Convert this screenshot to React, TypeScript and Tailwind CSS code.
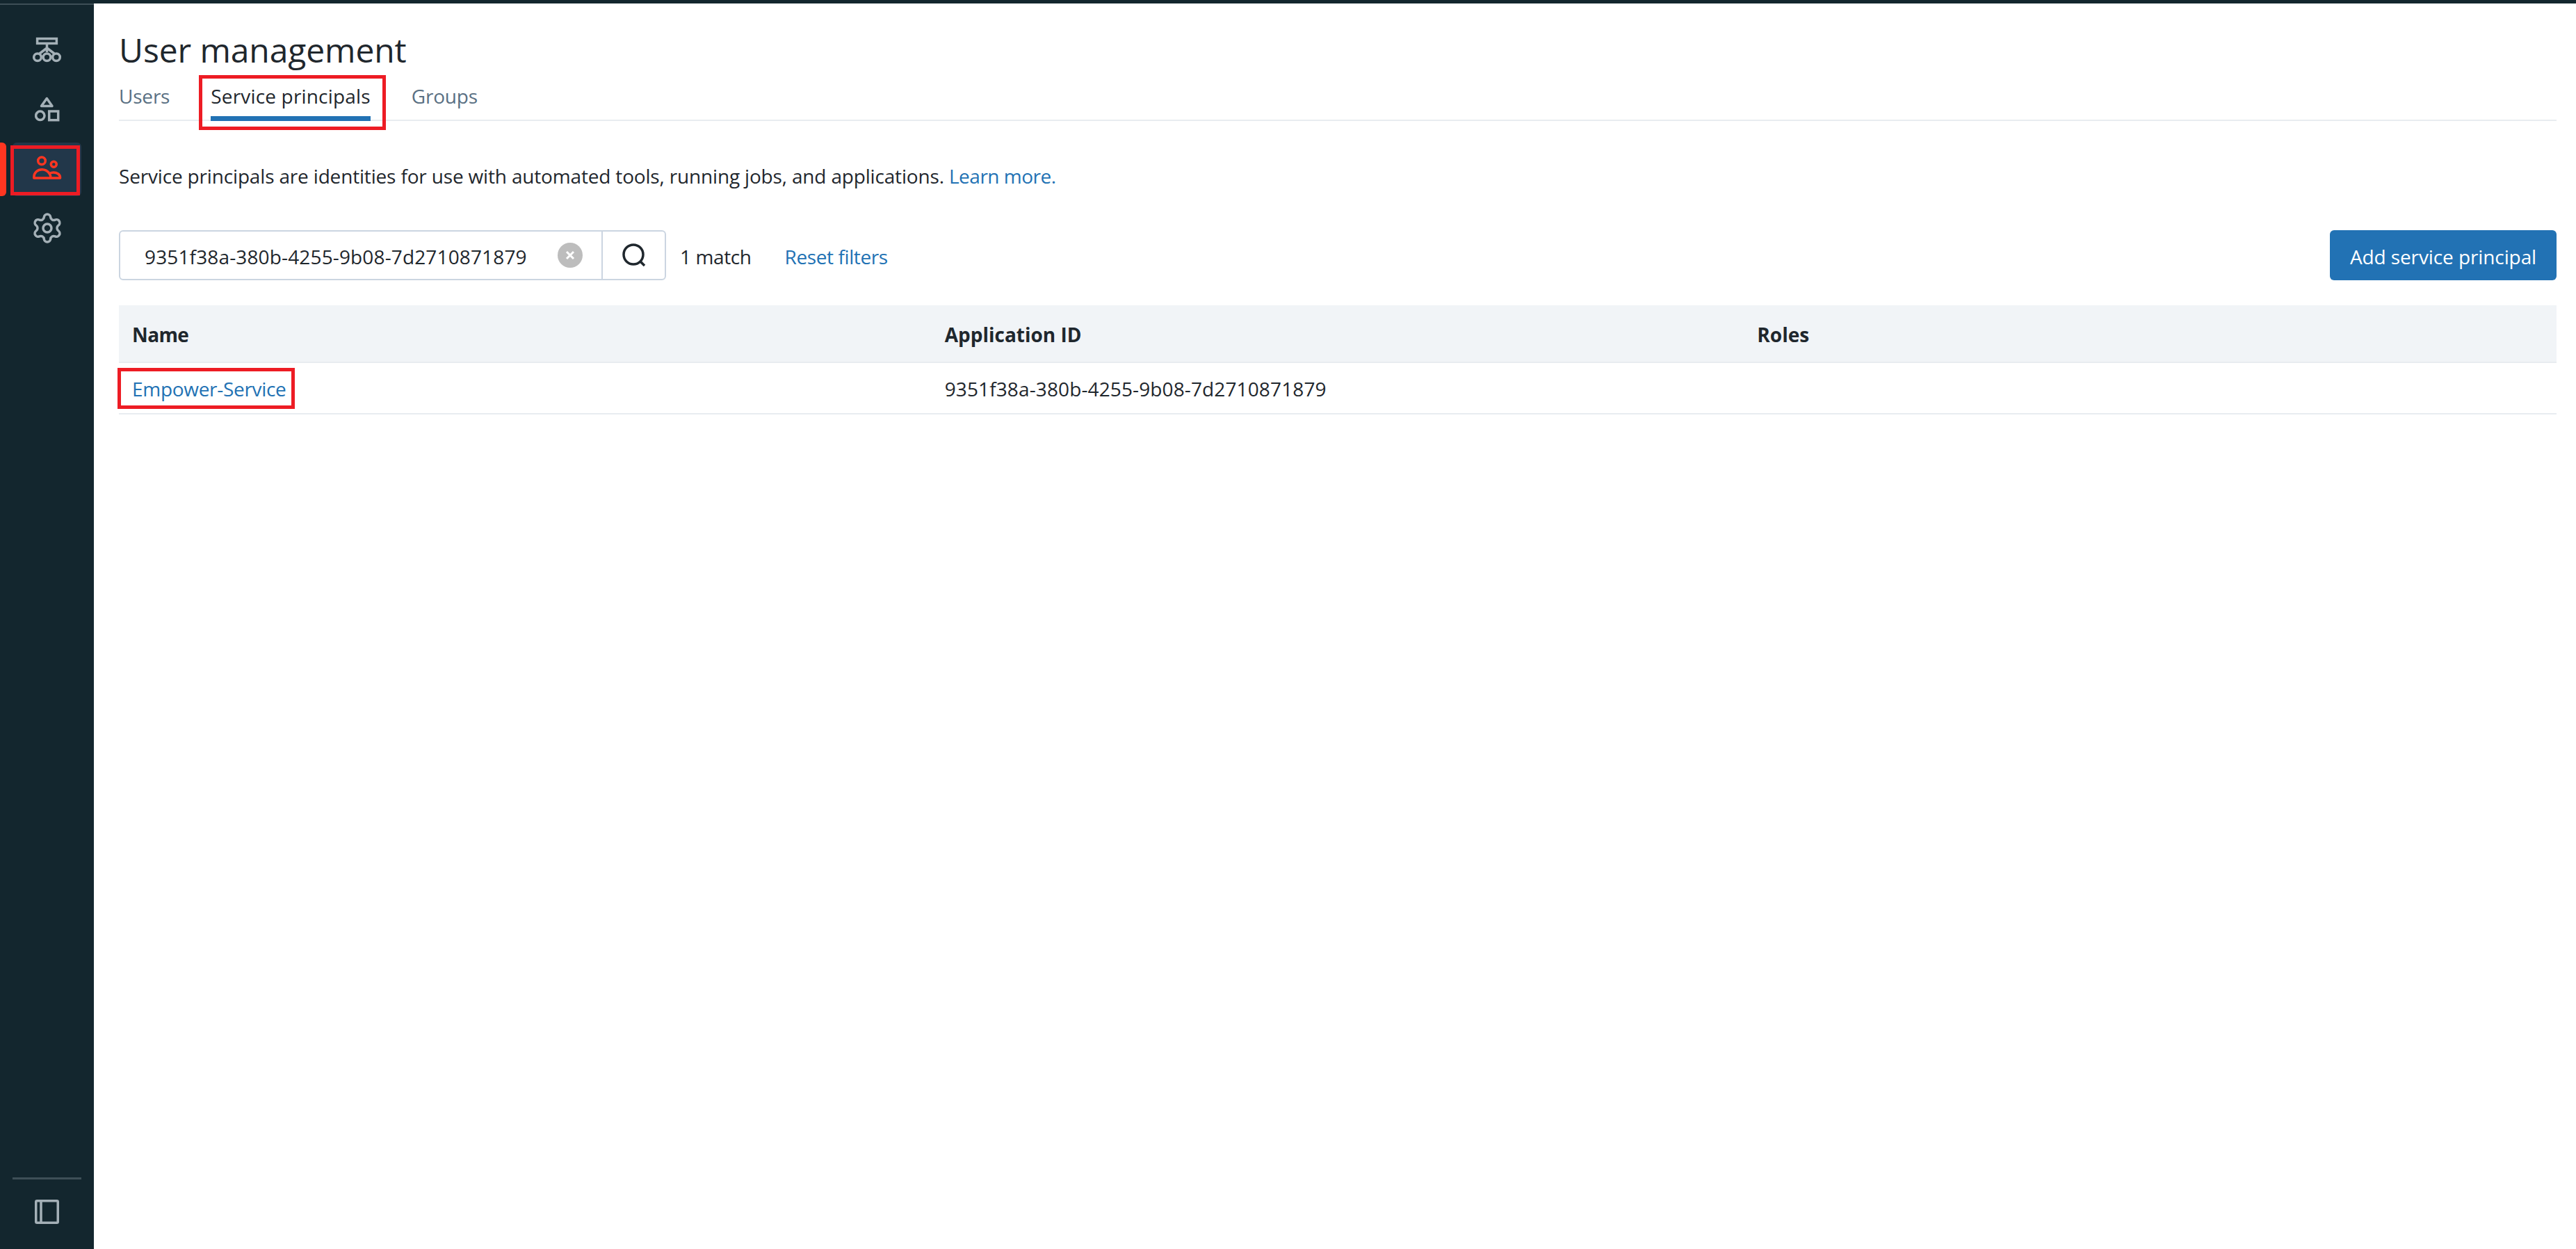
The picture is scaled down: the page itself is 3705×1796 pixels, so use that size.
import { Settings } from "lucide-react";

const font = "font-['Open_Sans','Noto_Sans',sans-serif]";

function SidebarIcon({ children, active }: { children: React.ReactNode; active?: boolean }) {
  return (
    <div className="relative flex h-[85px] w-full items-center justify-center">
      {active && <div className="absolute left-0 top-[6px] h-[77px] w-[9px] rounded-r-md bg-[#ff3621]" />}
      {active && <div className="absolute left-[18px] top-[6px] h-[77px] w-[99px] rounded-md bg-[#22374a]" />}
      {active && <div className="absolute left-[15px] top-[10px] h-[72px] w-[100px] border-[5px] border-[#ed1c24]" />}
      <div className="relative flex">{children}</div>
    </div>
  );
}

export default function App() {
  return (
    <div className={`flex h-[1796px] w-[3705px] flex-col bg-white text-[#1f272d] ${font}`}>
      <div className="h-[5px] w-full shrink-0 bg-[#13262e]" />
      <div className="flex min-h-0 flex-1">
        <aside className="flex w-[135px] shrink-0 flex-col border-t-2 border-[#3e4f57] bg-[#13262e]">
          <div className="mt-[22px] flex flex-col">
            <SidebarIcon>
              <svg width="42" height="37" viewBox="0 0 42 37" fill="none" stroke="#a4b0b7" strokeWidth="3.5">
                <rect x="6.6" y="2.6" width="27.8" height="6.8" />
                <path d="M20.5 10v12M20.5 16L10 24M20.5 16L31 24" />
                <circle cx="7" cy="29.3" r="5.3" />
                <circle cx="20.5" cy="29.3" r="5.3" />
                <circle cx="34" cy="29.3" r="5.3" />
              </svg>
            </SidebarIcon>
            <SidebarIcon>
              <svg width="36" height="37" viewBox="0 0 36 37" fill="none" stroke="#a4b0b7" strokeWidth="3.5">
                <path d="M17.3 3.5L25 14.5H9.5z" strokeLinejoin="round" />
                <circle cx="7.8" cy="28.3" r="6.2" />
                <rect x="20.7" y="22" width="13" height="12.7" />
              </svg>
            </SidebarIcon>
            <SidebarIcon active>
              <svg width="42" height="35" viewBox="0 0 42 35" fill="none" stroke="#ff3621" strokeWidth="3.5">
                <circle cx="13" cy="7.3" r="5.3" />
                <circle cx="30.3" cy="12.3" r="4" />
                <path d="M1.8 32v-1C1.8 24 7 19.8 13.5 19.8c5 0 8 2.2 10.5 5.7 2-1 4-1.5 6-1.5 5 0 9.5 3 9.5 7v1z" strokeLinejoin="round" />
                <path d="M24 25.5c1.5 2 2 4.5 2 6.5" />
              </svg>
            </SidebarIcon>
            <SidebarIcon>
              <Settings className="mt-[2px]" size={48} color="#a4b0b7" strokeWidth={1.75} />
            </SidebarIcon>
          </div>
          <div className="mt-auto flex flex-col items-center pb-[36px]">
            <div className="h-[3px] w-[99px] bg-[#3e4f57]" />
            <svg className="mt-[29px]" width="35" height="35" viewBox="0 0 35 35" fill="none" stroke="#a4b0b7" strokeWidth="3.5">
              <rect x="1.75" y="1.75" width="31.5" height="31.5" rx="1.5" />
              <path d="M9 2v31" />
            </svg>
          </div>
        </aside>

        <main className="min-w-0 flex-1 pr-[28px] pl-[36px]">
          <h1 className="mt-[33px] text-[48px] leading-[68px] font-normal tracking-[-0.1px]">User management</h1>

          <div className="mt-[12px] flex h-[56px] gap-[59px] border-b-2 border-[#e8ecf0] text-[28px] leading-[40px] text-[#5a7083]">
            <span className="tracking-[-0.2px]">Users</span>
            <span className="relative tracking-[0.17px] text-[#1f272d]">
              Service principals
              <span className="absolute -top-[10px] -right-[22px] -bottom-[15px] -left-[17px] border-[5px] border-[#ed1c24]" />
              <span className="absolute right-0 -bottom-[2px] left-0 h-[7px] bg-[#2272b4]" />
            </span>
            <span className="tracking-[-0.2px]">Groups</span>
          </div>

          <p className="mt-[59px] text-[28px] leading-[40px] tracking-[-0.17px]">
            Service principals are identities for use with automated tools, running jobs, and applications.{" "}
            <span className="tracking-[-0.5px] text-[#2272b4]">Learn more.</span>
          </p>

          <div className="mt-[58px] flex h-[72px] items-center text-[28px] leading-[40px]">
            <div className="flex h-[72px] w-[787px] items-stretch rounded-md border-2 border-[#cbd5e1]">
              <div className="flex flex-1 items-center pl-[35px]">
                <span className="whitespace-nowrap pt-[3px] tracking-[0.14px]">9351f38a-380b-4255-9b08-7d2710871879</span>
                <span className="mr-[27px] ml-auto flex h-[36px] w-[36px] items-center justify-center rounded-full bg-[#bdbdbd]">
                  <svg width="16" height="16" viewBox="0 0 16 16" fill="none" stroke="#ffffff" strokeWidth="3">
                    <path d="M3 3l10 10M13 3L3 13" />
                  </svg>
                </span>
              </div>
              <div className="flex w-[91px] items-center justify-center border-l-2 border-[#cbd5e1]">
                <svg width="36" height="36" viewBox="0 0 36 36" fill="none" stroke="#1f272d" strokeWidth="3.5">
                  <circle cx="17" cy="17" r="14" />
                  <path d="M27 27l6 6" />
                </svg>
              </div>
            </div>
            <span className="ml-[20px] whitespace-nowrap pt-[3px] tracking-[-0.4px]">1 match</span>
            <span className="ml-[48px] whitespace-nowrap pt-[3px] tracking-[-0.4px] text-[#2272b4]">Reset filters</span>
            <button className="ml-auto h-[72px] w-[326px] rounded-md bg-[#2272b4] pt-[3px] text-center text-[28px] tracking-[-0.1px] text-white">
              Add service principal
            </button>
          </div>

          <div className="mt-[36px] grid h-[83px] grid-cols-3 items-center border-b-2 border-[#e8ecf0] bg-[#f1f4f7] text-[28px] leading-[40px] font-bold">
            <div className="pt-[2px] pl-[19px] tracking-[-0.6px]">Name</div>
            <div className="pt-[2px] pl-[19px]">Application ID</div>
            <div className="pt-[2px] pl-[19px]">Roles</div>
          </div>
          <div className="grid h-[74px] grid-cols-3 items-stretch border-b-2 border-[#e8ecf0] text-[28px] leading-[40px]">
            <div className="relative flex items-center pt-[2px] pl-[19px] tracking-[-0.3px] text-[#2272b4]">
              Empower-Service
              <span className="absolute top-[7px] left-[-2px] h-[59px] w-[255px] border-[5px] border-[#ed1c24]" />
            </div>
            <div className="flex items-center pt-[2px] pl-[19px] tracking-[0.12px]">9351f38a-380b-4255-9b08-7d2710871879</div>
            <div />
          </div>
        </main>
      </div>
    </div>
  );
}
